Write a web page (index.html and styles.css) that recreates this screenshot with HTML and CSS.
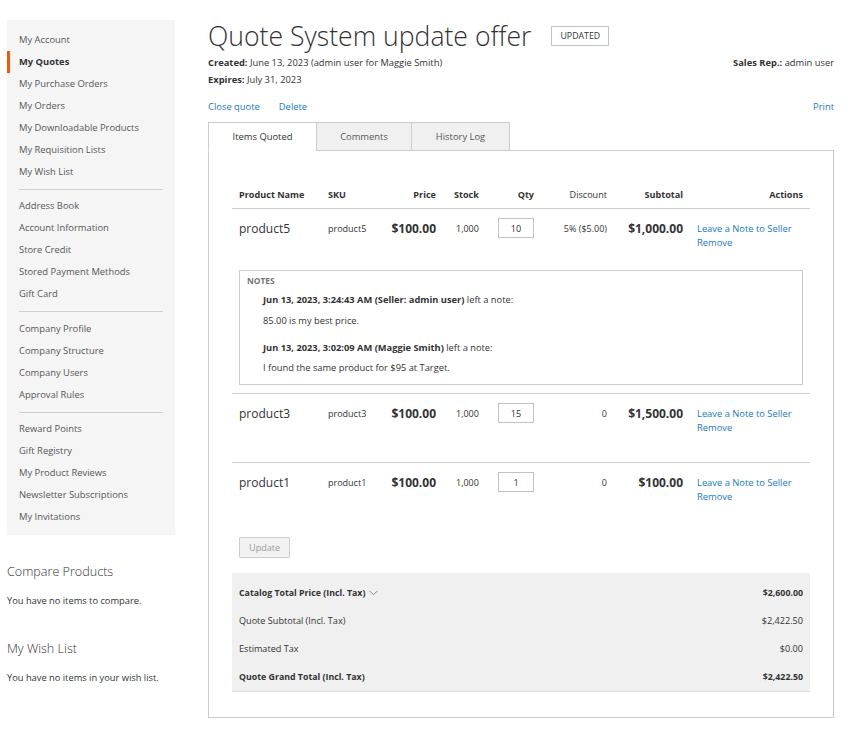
FILE: index.html
```html
<!DOCTYPE html>
<html lang="en">
<head>
<meta charset="utf-8">
<title>Quote System update offer</title>
<link rel="stylesheet" href="styles.css">
</head>
<body>
<div class="page">
  <aside class="sidebar">
    <nav class="nav">
      <ul class="nav-list">
        <li><a href="#">My Account</a></li>
        <li class="active"><span>My Quotes</span></li>
        <li><a href="#">My Purchase Orders</a></li>
        <li><a href="#">My Orders</a></li>
        <li><a href="#">My Downloadable Products</a></li>
        <li><a href="#">My Requisition Lists</a></li>
        <li><a href="#">My Wish List</a></li>
        <li class="divider"></li>
        <li><a href="#">Address Book</a></li>
        <li><a href="#">Account Information</a></li>
        <li><a href="#">Store Credit</a></li>
        <li><a href="#">Stored Payment Methods</a></li>
        <li><a href="#">Gift Card</a></li>
        <li class="divider wide"></li>
        <li><a href="#">Company Profile</a></li>
        <li><a href="#">Company Structure</a></li>
        <li><a href="#">Company Users</a></li>
        <li><a href="#">Approval Rules</a></li>
        <li class="divider"></li>
        <li><a href="#">Reward Points</a></li>
        <li><a href="#">Gift Registry</a></li>
        <li><a href="#">My Product Reviews</a></li>
        <li><a href="#">Newsletter Subscriptions</a></li>
        <li><a href="#">My Invitations</a></li>
      </ul>
    </nav>
    <div class="block first">
      <h3 class="block-title">Compare Products</h3>
      <p class="block-text">You have no items to compare.</p>
    </div>
    <div class="block second">
      <h3 class="block-title">My Wish List</h3>
      <p class="block-text">You have no items in your wish list.</p>
    </div>
  </aside>

  <main class="main">
    <div class="title-row">
      <h1 class="title">Quote System update offer</h1>
      <span class="badge">UPDATED</span>
    </div>
    <div class="meta">
      <div class="meta-left">
        <div class="meta-line"><b>Created:</b> June 13, 2023 (admin user for Maggie Smith)</div>
        <div class="meta-line"><b>Expires:</b> July 31, 2023</div>
      </div>
      <div class="meta-line"><b>Sales Rep.:</b> admin user</div>
    </div>
    <div class="actions-row">
      <div class="actions-left">
        <a href="#">Close quote</a>
        <a href="#">Delete</a>
      </div>
      <a href="#">Print</a>
    </div>

    <div class="tabs">
      <div class="tab active">Items Quoted</div>
      <div class="tab t-comments">Comments</div>
      <div class="tab t-history">History Log</div>
    </div>
    <div class="tab-content">
      <table class="items">
        <colgroup>
          <col class="c-name"><col class="c-sku"><col class="c-price"><col class="c-stock">
          <col class="c-qty"><col class="c-disc"><col class="c-sub"><col class="c-act">
        </colgroup>
        <thead>
          <tr>
            <th class="left">Product Name</th>
            <th class="left">SKU</th>
            <th class="right">Price</th>
            <th class="left stock">Stock</th>
            <th class="right">Qty</th>
            <th class="right disc-h">Discount</th>
            <th class="right">Subtotal</th>
            <th class="right">Actions</th>
          </tr>
        </thead>
        <tbody>
          <tr class="row no-border">
            <td class="name">product5</td>
            <td class="sku">product5</td>
            <td class="price">$100.00</td>
            <td class="stock">1,000</td>
            <td class="qty"><input class="qty-input" type="text" value="10"></td>
            <td class="disc">5% ($5.00)</td>
            <td class="subtotal">$1,000.00</td>
            <td class="act"><a href="#">Leave a Note to Seller</a><a href="#">Remove</a></td>
          </tr>
          <tr class="notes-row">
            <td colspan="8">
              <div class="notes">
                <div class="notes-label">NOTES</div>
                <div class="note">
                  <div class="note-head"><b>Jun 13, 2023, 3:24:43 AM (Seller: admin user)</b> left a note:</div>
                  <div class="note-text">85.00 is my best price.</div>
                </div>
                <div class="note">
                  <div class="note-head"><b>Jun 13, 2023, 3:02:09 AM (Maggie Smith)</b> left a note:</div>
                  <div class="note-text">I found the same product for $95 at Target.</div>
                </div>
              </div>
            </td>
          </tr>
          <tr class="row">
            <td class="name">product3</td>
            <td class="sku">product3</td>
            <td class="price">$100.00</td>
            <td class="stock">1,000</td>
            <td class="qty"><input class="qty-input" type="text" value="15"></td>
            <td class="disc">0</td>
            <td class="subtotal">$1,500.00</td>
            <td class="act"><a href="#">Leave a Note to Seller</a><a href="#">Remove</a></td>
          </tr>
          <tr class="row">
            <td class="name">product1</td>
            <td class="sku">product1</td>
            <td class="price">$100.00</td>
            <td class="stock">1,000</td>
            <td class="qty"><input class="qty-input" type="text" value="1"></td>
            <td class="disc">0</td>
            <td class="subtotal">$100.00</td>
            <td class="act"><a href="#">Leave a Note to Seller</a><a href="#">Remove</a></td>
          </tr>
        </tbody>
      </table>

      <div class="update-wrap"><button class="update-btn" disabled>Update</button></div>

      <div class="totals">
        <div class="tot-row strong">
          <span class="tot-label">Catalog Total Price (Incl. Tax)
            <svg class="chev" width="9" height="6" viewBox="0 0 9 6"><path d="M0.5 0.8 L4.5 4.8 L8.5 0.8" fill="none" stroke="#8a8a8a" stroke-width="1"/></svg>
          </span>
          <span>$2,600.00</span>
        </div>
        <div class="tot-row"><span>Quote Subtotal (Incl. Tax)</span><span>$2,422.50</span></div>
        <div class="tot-row"><span>Estimated Tax</span><span>$0.00</span></div>
        <div class="tot-row strong"><span>Quote Grand Total (Incl. Tax)</span><span>$2,422.50</span></div>
      </div>
    </div>
  </main>
</div>
</body>
</html>
```

FILE: styles.css
```css
* { box-sizing: border-box; }
html, body { margin: 0; padding: 0; background: #fff; }
body {
  font-family: "Open Sans", "Liberation Sans", sans-serif;
  font-size: 9.4px;
  color: #333;
}
a { color: #1979c3; text-decoration: none; }
b { font-weight: 700; }

.page {
  display: flex;
  align-items: flex-start;
  padding: 20px 25px 0 7px;
  gap: 33px;
}

/* Sidebar */
.sidebar { width: 168px; flex: none; }
.nav { background: #f5f5f5; padding: 9px 0 7px; }
.nav-list { list-style: none; margin: 0; padding: 0; }
.nav-list li {
  height: 22px;
  line-height: 22px;
  padding-left: 9px;
  border-left: 3px solid transparent;
  font-size: 9.4px;
}
.nav-list li a { color: #575757; display: block; }
.nav-list li.active { border-left-color: #ff5501; font-weight: 700; color: #333; }
.nav-list li.divider {
  height: 1px;
  border-left: 0;
  padding: 0;
  margin: 6px 12px 5px 12px;
  background: #d1d1d1;
}
.nav-list li.divider.wide { margin-bottom: 6px; }

.block-title {
  margin: 0;
  font-weight: 300;
  font-size: 12.6px;
  line-height: 18px;
  color: #333;
}
.block-text { margin: 13px 0 0; font-size: 9.3px; line-height: 14px; color: #333; }
.block.first { margin-top: 28px; }
.block.second { margin-top: 32px; }

/* Main */
.main { flex: 1; min-width: 0; }
.title-row { display: flex; align-items: center; height: 31px; gap: 20px; }
.title {
  margin: 0;
  font-size: 26.6px;
  font-weight: 300;
  line-height: 30px;
  color: #333;
}
.badge {
  display: inline-flex;
  align-items: center;
  height: 20px;
  padding: 0 8px;
  border: 1px solid #c2c2c2;
  font-size: 8.8px;
  color: #333;
  margin-top: 1px;
}
.meta { display: flex; justify-content: space-between; margin-top: 3px; }
.meta-line { line-height: 17px; font-size: 9.35px; }

.actions-row {
  display: flex;
  justify-content: space-between;
  margin-top: 10px;
  line-height: 17px;
  font-size: 9.4px;
}
.actions-left { display: flex; gap: 19px; }

/* Tabs */
.tabs { display: flex; margin-top: 7px; position: relative; z-index: 1; }
.tab {
  height: 29px;
  line-height: 28px;
  text-align: center;
  border: 1px solid #ccc;
  background: #f0f0f0;
  color: #575757;
  font-size: 9.4px;
  margin-right: -1px;
}
.tab.active { width: 109px; background: #fff; border-bottom-color: #fff; color: #333; }
.t-comments { width: 96px; }
.t-history { width: 99px; }

.tab-content {
  border: 1px solid #ccc;
  margin-top: -1px;
  padding: 24px 23px 25px;
}

/* Items table */
.items { width: 100%; border-collapse: collapse; table-layout: fixed; }
.c-name { width: 89px; }
.c-sku { width: 56px; }
.c-price { width: 66px; }
.c-stock { width: 41px; }
.c-qty { width: 57px; }
.c-disc { width: 73px; }
.c-sub { width: 76px; }
.c-act { width: 120px; }

.items th {
  font-weight: 700;
  font-size: 9.1px;
  padding: 13px 7px 6px;
  line-height: 14px;
  border-bottom: 1px solid #ccc;
  color: #333;
  white-space: nowrap;
}
.items th.left { text-align: left; }
.items th.right { text-align: right; }
.items th.stock { padding-left: 11px; }
.items th.disc-h { font-weight: 400; }

.items td {
  padding: 0 7px;
  vertical-align: top;
  white-space: nowrap;
}
.row td { padding-top: 12px; height: 69px; }
.row.no-border td { height: auto; padding-bottom: 20px; }
.items tbody tr.row { border-top: 1px solid #ccc; }
.items tbody tr.row.no-border { border-top: 0; }

.name { font-size: 12px; line-height: 15px; color: #333; }
.sku { font-size: 9px; line-height: 15px; }
.price { font-size: 12px; font-weight: 700; text-align: right; line-height: 15px; }
.items td.stock { font-size: 9px; line-height: 15px; padding-left: 13px; }
.qty { text-align: right; }
.qty-input {
  width: 36px;
  height: 20px;
  margin-top: -3px;
  border: 1px solid #c2c2c2;
  font-family: "Open Sans", "Liberation Sans", sans-serif;
  font-size: 9.1px;
  color: #333;
  text-align: center;
  padding: 0;
  background: #fff;
}
.disc { text-align: right; font-size: 9px; line-height: 15px; color: #333; }
.subtotal { text-align: right; font-size: 12px; font-weight: 700; line-height: 15px; }
.items td.act { font-size: 9.35px; line-height: 14px; padding-top: 13px; }
.act a { display: block; }

.items .notes-row td { padding: 0 7px 8px; }
.notes {
  border: 1px solid #ccc;
  padding: 3px 7px 9px;
}
.notes-label { font-size: 8.4px; font-weight: 700; color: #777; line-height: 14px; }
.note { padding-left: 16px; }
.note-head { font-size: 9.3px; line-height: 14px; margin-top: 5px; color: #333; }
.note-text { font-size: 9.3px; line-height: 14px; margin-top: 7px; }
.note + .note .note-head { margin-top: 13px; }
.note + .note .note-text { margin-top: 6px; }

.update-wrap { padding: 0 7px; margin-top: 5px; }
.update-btn {
  height: 21px;
  padding: 0 9px;
  background: #f2f2f2;
  border: 1px solid #cdcdcd;
  color: #9a9a9a;
  font-family: "Open Sans", "Liberation Sans", sans-serif;
  font-size: 9.1px;
  border-radius: 1px;
}

.totals {
  margin-top: 15px;
  background: #f0f0f0;
  border-bottom: 1px solid #ddd;
  padding: 6px 7px 0;
}
.tot-row {
  display: flex;
  justify-content: space-between;
  align-items: center;
  height: 28px;
  font-size: 9.1px;
}
.tot-row.strong { font-weight: 700; font-size: 8.8px; }
.tot-label { display: inline-flex; align-items: center; gap: 4px; }
.chev { display: block; }
```
